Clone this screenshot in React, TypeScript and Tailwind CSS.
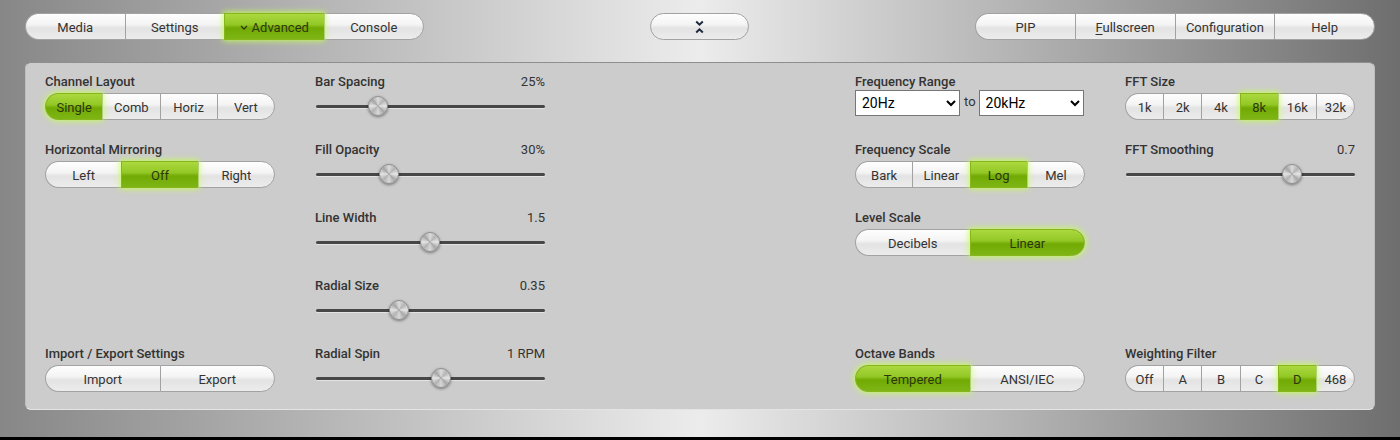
import React from "react";

const font = { fontFamily: "Roboto, 'Noto Sans', 'Liberation Sans', sans-serif" };

const plain =
  "bg-[linear-gradient(to_bottom,#fefefe_0%,#f4f4f4_42%,#e3e3e3_56%,#ececec_100%)] text-[#333] border-[#a2a2a2]";
const lit =
  "relative z-10 bg-[linear-gradient(to_bottom,#abd93f_0%,#93c826_42%,#72aa04_56%,#7db515_100%)] text-[#2c370c] border-[#86b51c] shadow-[0_0_6px_1px_rgba(196,255,80,0.9)]";

function Seg({ items, active }: { items: React.ReactNode[]; active: number }) {
  return (
    <div className="flex h-[27px] w-full">
      {items.map((it, i) => {
        const first = i === 0;
        const last = i === items.length - 1;
        return (
          <div
            key={i}
            className={[
              "flex flex-1 items-center justify-center border-y border-l pt-[2px] text-[13px] leading-none",
              first ? "rounded-l-full" : "",
              last ? "rounded-r-full border-r" : "",
              i === active ? lit : plain,
            ].join(" ")}
          >
            {it}
          </div>
        );
      })}
    </div>
  );
}

function Label({ text, value }: { text: string; value?: string }) {
  return (
    <div className="flex h-[18px] items-center justify-between pt-[2px] text-[13px] text-[#333]">
      <span className="font-medium">{text}</span>
      {value && <span>{value}</span>}
    </div>
  );
}

function Slider({ text, value, pos }: { text: string; value: string; pos: number }) {
  return (
    <div>
      <Label text={text} value={value} />
      <div className="relative mt-[3px] h-[27px]">
        <div className="absolute left-[1px] right-0 top-[12px] h-[3px] rounded-full bg-[#474747] shadow-[0_1px_0_rgba(255,255,255,0.45)]" />
        <div
          className="absolute top-[3px] h-[20px] w-[20px] rounded-full border border-[#8f8f8f] bg-[conic-gradient(#dcdcdc,#b4b4b4,#e6e6e6,#a8a8a8,#d8d8d8,#b2b2b2,#e4e4e4,#a6a6a6,#dcdcdc)] shadow-[0_1px_3px_rgba(0,0,0,0.45)]"
          style={{ left: `calc(${pos} * (100% - 20px))` }}
        />
      </div>
    </div>
  );
}

function Cell({ label, children }: { label: string; children: React.ReactNode }) {
  return (
    <div>
      <Label text={label} />
      <div className="mt-[3px]">{children}</div>
    </div>
  );
}

function Select({ value, options }: { value: string; options: string[] }) {
  return (
    <select
      defaultValue={value}
      className="h-[26px] w-[105px] border border-[#767676] bg-white pl-[2px] text-[14px] text-black"
      style={font}
    >
      {options.map((o) => (
        <option key={o}>{o}</option>
      ))}
    </select>
  );
}

export default function App() {
  return (
    <div className="flex h-[440px] flex-col" style={font}>
      <div className="h-[437px] bg-[linear-gradient(90deg,#878787_0%,#ececec_50%,#6e6e6e_100%)] px-[25px] pt-[13px]">
        <div className="flex items-center justify-between">
          <div className="w-[399px]">
            <Seg
              active={2}
              items={[
                "Media",
                "Settings",
                <span key="a" className="flex items-center gap-[4px]">
                  <svg width="8" height="5" viewBox="0 0 8 5">
                    <path d="M1 1l3 3 3-3" fill="none" stroke="#2c370c" strokeWidth="1.3" />
                  </svg>
                  Advanced
                </span>,
                "Console",
              ]}
            />
          </div>
          <div className={"flex h-[27px] w-[99px] items-center justify-center rounded-full border " + plain}>
            <svg width="9" height="16" viewBox="0 0 9 16">
              <path d="M1.2 2.5l3.3 3.2 3.3-3.2" fill="none" stroke="#1d2a3e" strokeWidth="2" />
              <path d="M1.2 13.5l3.3-3.2 3.3 3.2" fill="none" stroke="#1d2a3e" strokeWidth="2" />
            </svg>
          </div>
          <div className="w-[400px]">
            <Seg
              active={-1}
              items={[
                "PIP",
                <span key="f">
                  <span className="underline underline-offset-2">F</span>ullscreen
                </span>,
                "Configuration",
                "Help",
              ]}
            />
          </div>
        </div>

        <div className="mt-[22px] rounded-[6px] border border-[#bdbdbd] border-b-[#e4e4e4] border-t-[#8e8e8e] bg-[#cccccc] pb-[17px] pl-[19px] pt-[9px]">
          <div className="grid grid-cols-[repeat(5,230px)] grid-rows-[repeat(5,48px)] gap-x-10 gap-y-5">
            <div className="col-start-1 row-start-1">
              <Cell label="Channel Layout">
                <Seg active={0} items={["Single", "Comb", "Horiz", "Vert"]} />
              </Cell>
            </div>
            <div className="col-start-1 row-start-2">
              <Cell label="Horizontal Mirroring">
                <Seg active={1} items={["Left", "Off", "Right"]} />
              </Cell>
            </div>
            <div className="col-start-1 row-start-5">
              <Cell label="Import / Export Settings">
                <Seg active={-1} items={["Import", "Export"]} />
              </Cell>
            </div>

            <div className="col-start-2 row-start-1">
              <Slider text="Bar Spacing" value="25%" pos={0.252} />
            </div>
            <div className="col-start-2 row-start-2">
              <Slider text="Fill Opacity" value="30%" pos={0.304} />
            </div>
            <div className="col-start-2 row-start-3">
              <Slider text="Line Width" value="1.5" pos={0.502} />
            </div>
            <div className="col-start-2 row-start-4">
              <Slider text="Radial Size" value="0.35" pos={0.351} />
            </div>
            <div className="col-start-2 row-start-5">
              <Slider text="Radial Spin" value="1 RPM" pos={0.554} />
            </div>

            <div className="col-start-4 row-start-1">
              <Label text="Frequency Range" />
              <div className="flex items-center">
                <Select value="20Hz" options={["10Hz", "20Hz", "30Hz", "40Hz"]} />
                <span className="ml-[4px] mr-[3px] mb-[3px] text-[13px] text-[#333]">to</span>
                <Select value="20kHz" options={["16kHz", "20kHz", "22kHz"]} />
              </div>
            </div>
            <div className="col-start-4 row-start-2">
              <Cell label="Frequency Scale">
                <Seg active={2} items={["Bark", "Linear", "Log", "Mel"]} />
              </Cell>
            </div>
            <div className="col-start-4 row-start-3">
              <Cell label="Level Scale">
                <Seg active={1} items={["Decibels", "Linear"]} />
              </Cell>
            </div>
            <div className="col-start-4 row-start-5">
              <Cell label="Octave Bands">
                <Seg active={0} items={["Tempered", "ANSI/IEC"]} />
              </Cell>
            </div>

            <div className="col-start-5 row-start-1">
              <Cell label="FFT Size">
                <Seg active={3} items={["1k", "2k", "4k", "8k", "16k", "32k"]} />
              </Cell>
            </div>
            <div className="col-start-5 row-start-2">
              <Slider text="FFT Smoothing" value="0.7" pos={0.746} />
            </div>
            <div className="col-start-5 row-start-5">
              <Cell label="Weighting Filter">
                <Seg active={4} items={["Off", "A", "B", "C", "D", "468"]} />
              </Cell>
            </div>
          </div>
        </div>
      </div>
      <div className="h-[3px] bg-black" />
    </div>
  );
}
